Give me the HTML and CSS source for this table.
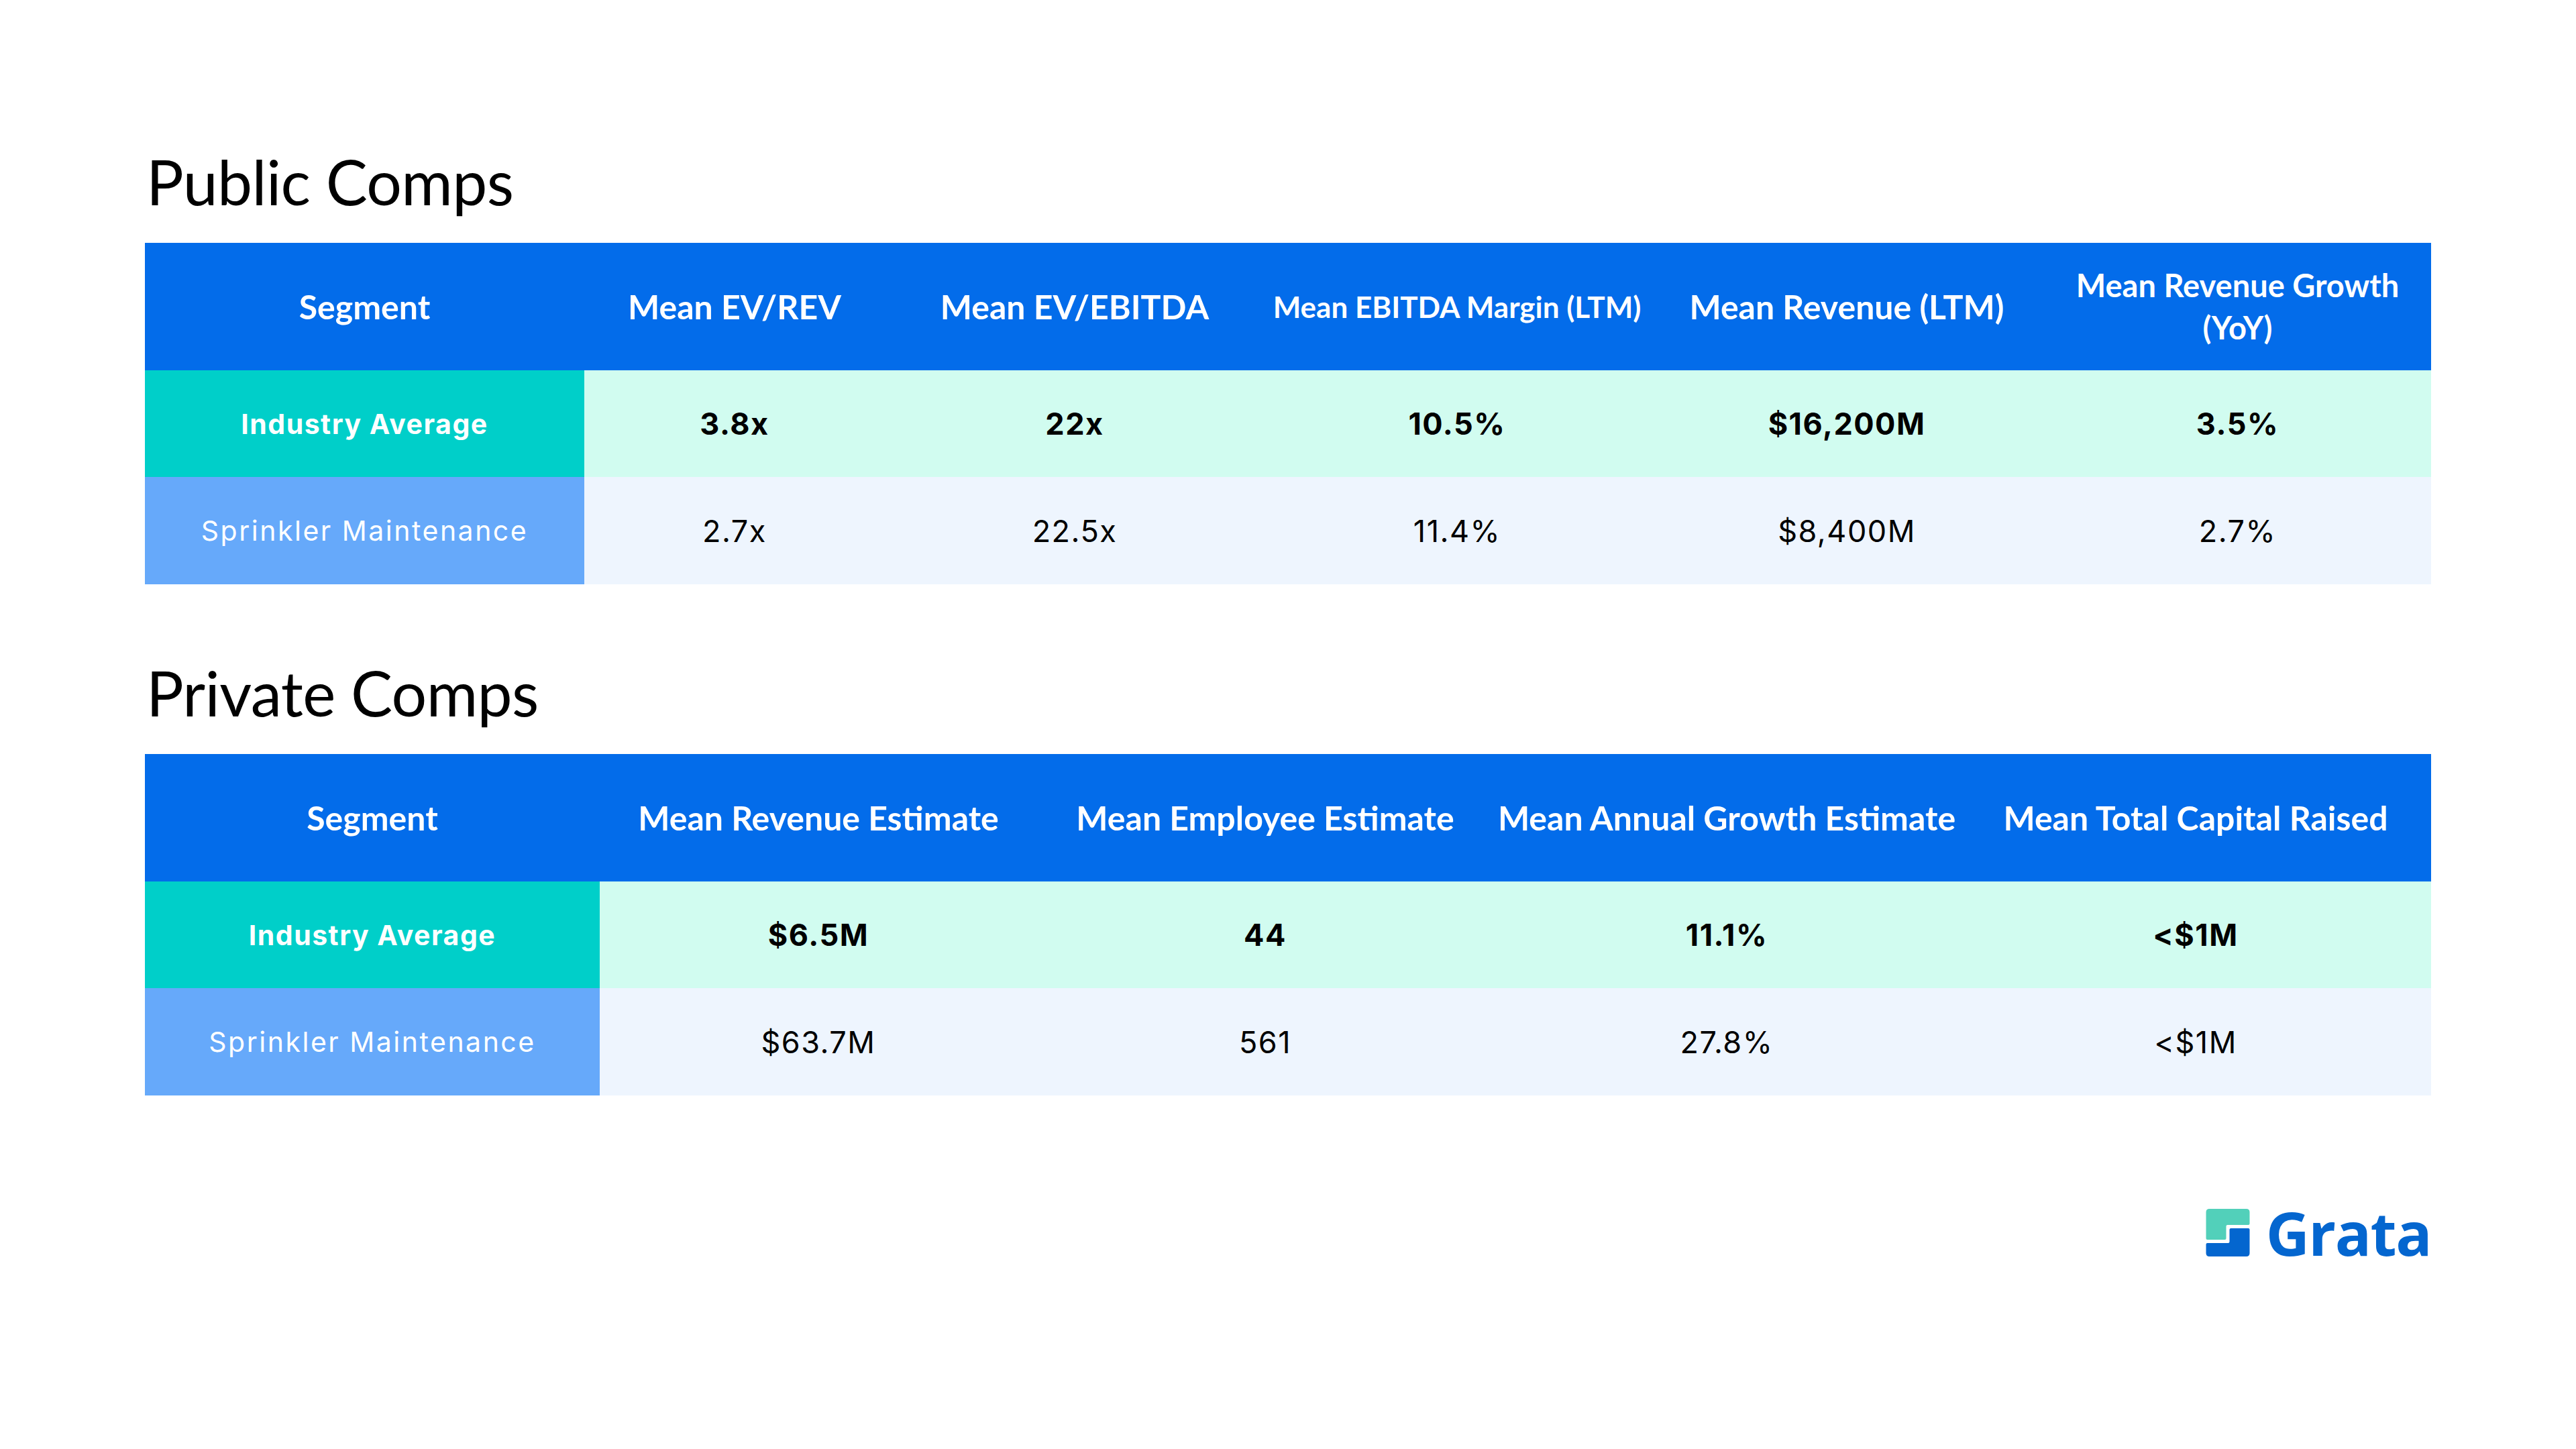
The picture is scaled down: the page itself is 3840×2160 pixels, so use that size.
FILE: index.html
```html
<!DOCTYPE html>
<html lang="en">
<head>
<meta charset="utf-8">
<title>Comps</title>
<link rel="stylesheet" href="styles.css">
</head>
<body>
<div class="page">
  <section class="section">
    <h1 class="title">Public Comps</h1>
    <div class="grid grid-public">
      <div class="hd">Segment</div>
      <div class="hd">Mean EV/REV</div>
      <div class="hd">Mean EV/EBITDA</div>
      <div class="hd hd-small">Mean EBITDA Margin (LTM)</div>
      <div class="hd">Mean Revenue (LTM)</div>
      <div class="hd hd-mid">Mean Revenue Growth<br>(YoY)</div>

      <div class="seg seg-avg">Industry Average</div>
      <div class="cell avg">3.8x</div>
      <div class="cell avg">22x</div>
      <div class="cell avg">10.5%</div>
      <div class="cell avg">$16,200M</div>
      <div class="cell avg">3.5%</div>

      <div class="seg seg-sub">Sprinkler Maintenance</div>
      <div class="cell sub">2.7x</div>
      <div class="cell sub">22.5x</div>
      <div class="cell sub">11.4%</div>
      <div class="cell sub">$8,400M</div>
      <div class="cell sub">2.7%</div>
    </div>
  </section>

  <section class="section section-next">
    <h1 class="title">Private Comps</h1>
    <div class="grid grid-private">
      <div class="hd">Segment</div>
      <div class="hd">Mean Revenue Estimate</div>
      <div class="hd">Mean Employee Estimate</div>
      <div class="hd">Mean Annual Growth Estimate</div>
      <div class="hd">Mean Total Capital Raised</div>

      <div class="seg seg-avg">Industry Average</div>
      <div class="cell avg">$6.5M</div>
      <div class="cell avg">44</div>
      <div class="cell avg">11.1%</div>
      <div class="cell avg">&lt;$1M</div>

      <div class="seg seg-sub">Sprinkler Maintenance</div>
      <div class="cell sub">$63.7M</div>
      <div class="cell sub">561</div>
      <div class="cell sub">27.8%</div>
      <div class="cell sub">&lt;$1M</div>
    </div>
  </section>

  <div class="logo">
    <svg class="logo-mark" viewBox="0 0 65 71" width="66" height="71" aria-hidden="true">
      <path fill="#52D0BA" d="M5,0 H60 Q65,0 65,5 V22 Q65,24 63,24 H32 Q30,24 30,26 V44 Q30,46 28,46 H2 Q0,46 0,44 V5 Q0,0 5,0 Z"/>
      <path fill="#0466CF" d="M37,29 H63 Q65,29 65,31 V66 Q65,71 60,71 H5 Q0,71 0,66 V53 Q0,51 2,51 H33 Q35,51 35,49 V31 Q35,29 37,29 Z"/>
    </svg>
    <span class="logo-text">Grata</span>
  </div>
</div>
</body>
</html>
```

FILE: styles.css
```css
html, body {
  margin: 0;
  padding: 0;
  background: #ffffff;
}

.page {
  width: 3840px;
  height: 2160px;
  box-sizing: border-box;
  padding: 214px 216px 0 216px;
  font-family: "Inter", "Open Sans", sans-serif;
  color: #000;
}

.section-next {
  margin-top: 105px;
}

.title {
  margin: 0 0 36px 2px;
  font-family: "Lato", sans-serif;
  font-weight: 400;
  font-size: 93px;
  line-height: 112px;
  letter-spacing: -0.6px;
  color: #000;
}

.grid {
  display: grid;
  width: 3408px;
  grid-template-rows: 190px 159px 160px;
}

.grid-public {
  grid-template-columns: 655px 448px 566px 574px 588px 577px;
}

.grid-private {
  grid-template-columns: 678px 652px 680px 696px 702px;
}

.hd {
  background: #036CEA;
  color: #ffffff;
  font-family: "Lato", sans-serif;
  font-weight: 700;
  font-size: 50px;
  line-height: 63px;
  display: flex;
  align-items: center;
  justify-content: center;
  text-align: center;
  padding: 0 20px;
  white-space: nowrap;
}

.hd-small {
  font-size: 44px;
  padding: 0 6px;
}

.hd-mid {
  font-size: 47px;
}

.seg,
.cell {
  display: flex;
  align-items: center;
  justify-content: center;
  text-align: center;
  white-space: nowrap;
}

.seg {
  color: #ffffff;
  font-size: 41px;
}

.seg-avg {
  background: #00CFC9;
  font-weight: 700;
  letter-spacing: 1.5px;
}

.seg-sub {
  background: #66A9FA;
  font-weight: 400;
  letter-spacing: 2.5px;
}

.cell {
  font-size: 45px;
  color: #000;
  letter-spacing: 1.5px;
}

.cell.avg {
  background: #D1FCF0;
  font-weight: 700;
}

.cell.sub {
  background: #EEF5FE;
  font-weight: 400;
}

.logo {
  margin-top: 159px;
  display: flex;
  justify-content: flex-end;
  align-items: center;
  gap: 24px;
  width: 3408px;
}

.logo-mark {
  display: block;
  flex: none;
}

.logo-text {
  font-family: "Open Sans", sans-serif;
  font-weight: 700;
  font-size: 90px;
  line-height: 90px;
  color: #0466CF;
  letter-spacing: -1.5px;
}
```
